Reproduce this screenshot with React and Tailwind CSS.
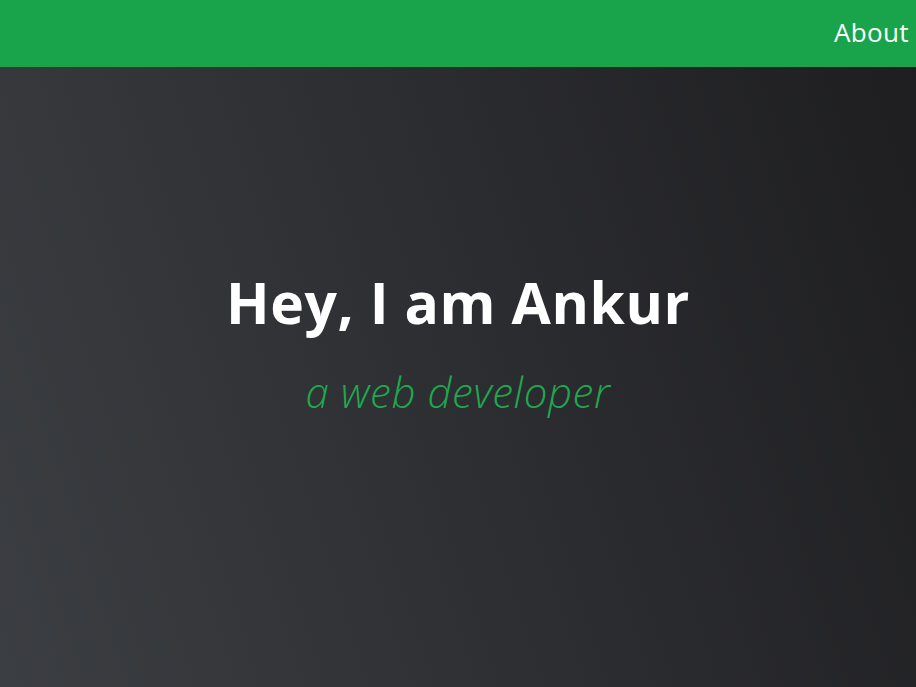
import React from 'react';

const Header = () => (
    <header className="h-[67px] bg-[#19a44b] flex items-center overflow-hidden whitespace-nowrap">
        {/* logo area is empty in this view, nav sits at the right edge */}
        <div className="w-[834px] shrink-0" />
        <nav>
            <ul className="flex text-[26px] leading-[32px] text-white font-normal -mt-[3px] tracking-[0.3px]">
                <li>About</li>
            </ul>
        </nav>
    </header>
);

const Hero = () => (
    <section className="h-[620px] bg-[linear-gradient(72deg,#3b3e42_0%,#2d2e32_50%,#1e1e20_100%)] flex flex-col items-center pt-[199px]">
        <h1 className="text-[57px] leading-[72px] font-bold text-white tracking-[0.6px]">
            Hey, I am Ankur
        </h1>
        <p className="mt-[28px] text-[42px] leading-[52px] italic font-light text-[#1fa84f] tracking-[0.6px]">
            a web developer
        </p>
    </section>
);

export default function App() {
    return (
        <div className="w-[916px] h-[687px] overflow-hidden" style={{ fontFamily: '"Open Sans", "Liberation Sans", sans-serif' }}>
            <Header />
            <Hero />
        </div>
    );
}
